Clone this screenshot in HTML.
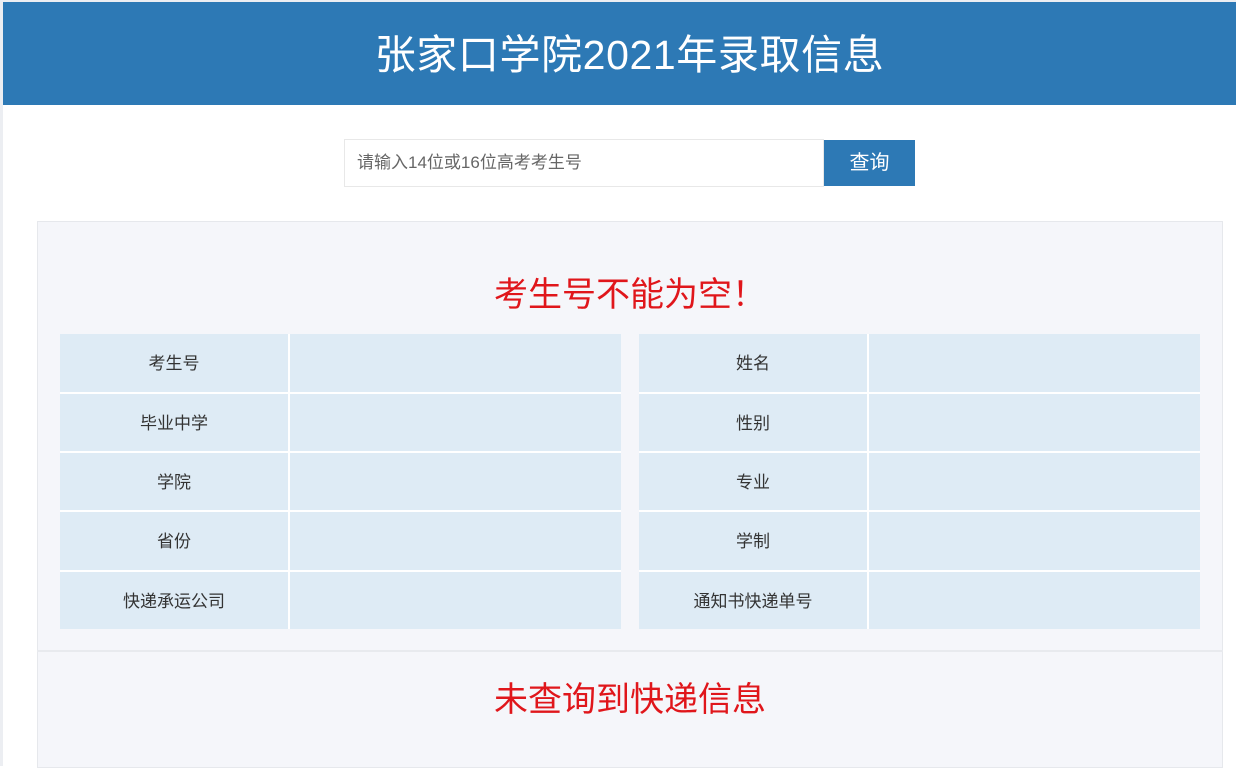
<!DOCTYPE html>
<html><head><meta charset="utf-8"><style>
html,body{margin:0;padding:0;}
body{width:1236px;height:766px;background:#fff;position:relative;overflow:hidden;font-family:"Liberation Sans","Noto Sans CJK SC",sans-serif;}
.lb{position:absolute;left:0;top:0;width:3px;height:766px;background:#eceef2;}
.tb{position:absolute;left:0;top:0;width:1236px;height:2px;background:#eceef2;}
.hd{position:absolute;left:3px;top:2px;width:1213px;padding-left:20px;height:103px;background:#2d79b5;color:#fff;font-size:41px;letter-spacing:0.6px;text-align:center;line-height:106px;}
.in{position:absolute;left:344px;top:139px;height:46px;border:1px solid #e8e8e8;font-size:17px;color:#666;line-height:46px;padding-left:12px;width:466px;}
.bt{position:absolute;left:824px;top:140px;width:91px;height:46px;background:#2d79b5;color:#fff;font-size:20px;text-align:center;line-height:46px;}
.pn{position:absolute;left:37px;top:221px;width:1184px;height:545px;border:1px solid #e6e8ec;background:#f5f6fa;}
.dv{position:absolute;left:37px;top:650px;width:1186px;height:2px;background:#e8eaee;}
.err{position:absolute;left:37px;width:1186px;text-align:center;color:#e0161b;font-size:34px;}
.w{position:absolute;background:#fff;top:334px;height:295px;width:561px;}
.c{position:absolute;background:#deebf5;height:58px;line-height:60px;font-size:17px;color:#333;text-align:center;}
</style></head><body>
<div class="tb"></div><div class="lb"></div>
<div class="hd">张家口学院2021年录取信息</div>
<div class="in">请输入14位或16位高考考生号</div>
<div class="bt">查询</div>
<div class="pn"></div>
<div class="dv"></div>
<div class="err" style="top:267px;">考生号不能为空！</div>
<div class="w" style="left:60px"></div><div class="w" style="left:639px"></div>

<div class="c" style="left:60px;top:334px;width:228px">考生号</div><div class="c" style="left:290px;top:334px;width:331px"></div>
<div class="c" style="left:60px;top:394px;width:228px;height:57px">毕业中学</div><div class="c" style="left:290px;top:394px;width:331px;height:57px"></div>
<div class="c" style="left:60px;top:453px;width:228px;height:57px">学院</div><div class="c" style="left:290px;top:453px;width:331px;height:57px"></div>
<div class="c" style="left:60px;top:512px;width:228px">省份</div><div class="c" style="left:290px;top:512px;width:331px"></div>
<div class="c" style="left:60px;top:572px;width:228px;height:57px">快递承运公司</div><div class="c" style="left:290px;top:572px;width:331px;height:57px"></div>

<div class="c" style="left:639px;top:334px;width:228px">姓名</div><div class="c" style="left:869px;top:334px;width:331px"></div>
<div class="c" style="left:639px;top:394px;width:228px;height:57px">性别</div><div class="c" style="left:869px;top:394px;width:331px;height:57px"></div>
<div class="c" style="left:639px;top:453px;width:228px;height:57px">专业</div><div class="c" style="left:869px;top:453px;width:331px;height:57px"></div>
<div class="c" style="left:639px;top:512px;width:228px">学制</div><div class="c" style="left:869px;top:512px;width:331px"></div>
<div class="c" style="left:639px;top:572px;width:228px;height:57px">通知书快递单号</div><div class="c" style="left:869px;top:572px;width:331px;height:57px"></div>

<div class="err" style="top:672px;">未查询到快递信息</div>
</body></html>
